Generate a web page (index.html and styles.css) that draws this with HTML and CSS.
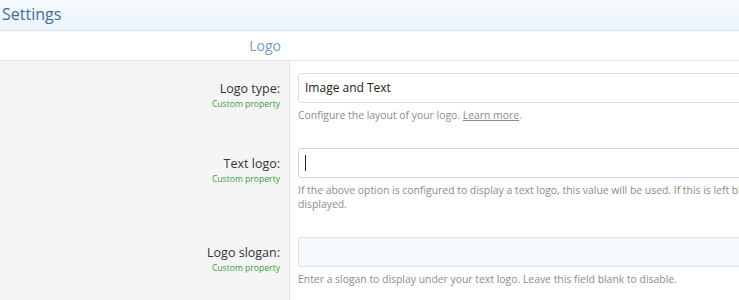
FILE: index.html
```html
<!DOCTYPE html>
<html lang="en">
<head>
    <meta charset="UTF-8">
    <meta name="viewport" content="width=device-width, initial-scale=1.0">
    <title>Settings</title>
    <link rel="stylesheet" href="styles.css">
</head>
<body>
    <div class="page-title">Settings</div>

    <!-- หัวข้อกลุ่ม -->
    <div class="group-head">
        <div class="group-label">Logo</div>
    </div>

    <div class="form">
        <!-- Logo type -->
        <div class="form-row">
            <div class="form-label">
                <div class="label-text">Logo type:</div>
                <div class="label-hint">Custom property</div>
            </div>
            <div class="form-field">
                <div class="input">Image and Text</div>
                <div class="explain">Configure the layout of your logo. <a href="#">Learn more</a>.</div>
            </div>
        </div>

        <!-- Text logo -->
        <div class="form-row">
            <div class="form-label">
                <div class="label-text">Text logo:</div>
                <div class="label-hint">Custom property</div>
            </div>
            <div class="form-field">
                <div class="input input-focus"><span class="caret"></span></div>
                <div class="explain">If the above option is configured to display a text logo, this value will be used. If this is left blank, the board title will be displayed.</div>
            </div>
        </div>

        <!-- Logo slogan -->
        <div class="form-row">
            <div class="form-label">
                <div class="label-text">Logo slogan:</div>
                <div class="label-hint">Custom property</div>
            </div>
            <div class="form-field">
                <div class="input input-soft"></div>
                <div class="explain">Enter a slogan to display under your text logo. Leave this field blank to disable.</div>
            </div>
        </div>
    </div>
</body>
</html>
```

FILE: styles.css
```css
body {
    margin: 0;
    overflow: hidden;
    font-family: "Open Sans", "Noto Sans", sans-serif;
    color: #222;
    background: #fff;
}

.page-title {
    height: 30px;
    padding-left: 2px;
    font-size: 16px;
    line-height: 28px;
    color: #3f6d96;
    background: linear-gradient(#f6f9fd, #eaf4fd);
    border-bottom: 1px solid #d8dfe7;
}

.group-head {
    height: 29px;
    border-bottom: 1px solid #e5e5e5;
}

.group-label {
    width: 281px;
    text-align: right;
    font-size: 14px;
    line-height: 29px;
    color: #6f9fca;
}

/* สองคอลัมน์: ป้ายชื่อซ้าย ช่องกรอกขวา */
.form {
    display: grid;
    grid-template-columns: 290px 1fr;
    width: 1000px;
}

.form-row {
    display: contents;
}

.form-label {
    background: #f5f5f5;
    border-right: 1px solid #e3e3e3;
    text-align: right;
    padding: 20px 9px 14px 0;
}

.label-text {
    font-size: 12.5px;
    line-height: 16px;
    color: #333;
}

.label-hint {
    font-size: 8.6px;
    line-height: 14px;
    color: #3d9a3d;
}

.form-field {
    padding: 12px 0 14px 8px;
}

.input {
    height: 28px;
    border: 1px solid #d9dee6;
    border-radius: 3px;
    padding-left: 6px;
    font-size: 12px;
    line-height: 28px;
    color: #222;
    display: flex;
    align-items: center;
}

.input-focus {
    border-color: #c9d7e8;
}

.caret {
    width: 1px;
    height: 16px;
    background: #222;
}

.input-soft {
    background: #f5f9fc;
    border-color: #dfe3e8;
}

.explain {
    margin-top: 5px;
    max-width: 600px;
    font-size: 10.4px;
    line-height: 14px;
    color: #8c8c8c;
}

.explain a {
    color: #8c8c8c;
}
```
